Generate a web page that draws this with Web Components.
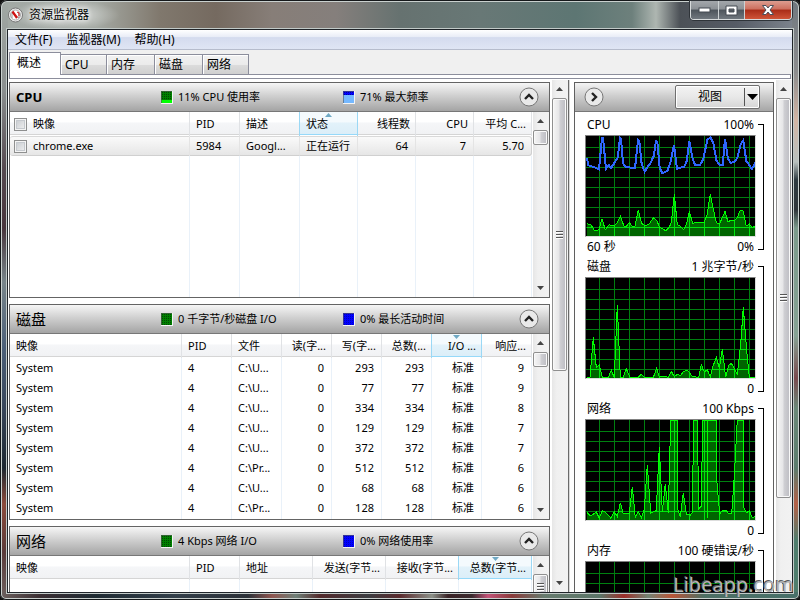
<!DOCTYPE html>
<html lang="zh-CN">
<head>
<meta charset="utf-8">
<title>资源监视器</title>
<style>
html, body { margin: 0; height: 100%; }
body { overflow: hidden; background: #111; color: #000; font: 12px/20px "Noto Sans", "Noto Sans CJK SC", sans-serif; }
</style>
</head>
<body>
<rm-window caption="资源监视器">
  <rm-menu slot="menu" items="文件(F)|监视器(M)|帮助(H)"></rm-menu>
  <rm-tabs slot="tabs" items="概述|CPU|内存|磁盘|网络"></rm-tabs>
  <rm-section slot="main" caption="CPU" bold meter1="11% CPU 使用率" meter2="71% 最大频率" kind1="low" kind2="high">
    <rm-table data="cpu"></rm-table>
    <rm-scrollbar slot="scroll" thumb="15"></rm-scrollbar>
  </rm-section>
  <rm-section slot="main" caption="磁盘" meter1="0 千字节/秒磁盘 I/O" meter2="0% 最长活动时间">
    <rm-table data="disk"></rm-table>
    <rm-scrollbar slot="scroll" thumb="15"></rm-scrollbar>
  </rm-section>
  <rm-section slot="main" caption="网络" meter1="4 Kbps 网络 I/O" meter2="0% 网络使用率">
    <rm-table data="net"></rm-table>
    <rm-scrollbar slot="scroll" thumb="26" grip></rm-scrollbar>
  </rm-section>
  <rm-scrollbar slot="mainscroll" thumb="273" grip></rm-scrollbar>
  <rm-graph slot="side" data="cpu" caption="CPU" max="100%" min="0%" span="60 秒"></rm-graph>
  <rm-graph slot="side" data="disk" caption="磁盘" max="1 兆字节/秒" min="0"></rm-graph>
  <rm-graph slot="side" data="net" caption="网络" max="100 Kbps" min="0"></rm-graph>
  <rm-graph slot="side" data="mem" caption="内存" max="100 硬错误/秒"></rm-graph>
  <rm-scrollbar slot="sidescroll" thumb="400" grip></rm-scrollbar>
</rm-window>

<script>
const BUTTON = `button { font: inherit; color: inherit; margin: 0; padding: 0; border: 0; background: none; }`;

function define(name, render) {
  customElements.define(name, class extends HTMLElement {
    connectedCallback() {
      if (this.shadowRoot) return;
      this.attachShadow({ mode: 'open' }).innerHTML = render(this);
    }
  });
}

/* ---------- window frame ---------- */
define('rm-window', el => `
<style>
${BUTTON}
:host { display: flex; flex-direction: column; box-sizing: border-box; height: 100vh; position: relative; padding: 0 8px 8px; border-radius: 7px 7px 6px 6px;
  box-shadow: inset 0 0 0 1px #15181a, inset 0 0 0 2px #c9d0ce;
  background:
    linear-gradient(90deg, #6d6260, #3b2f33 5%, #1f2b33 12%, #333f4a 22%, #2c3138 31%, #8f5650 34%, #6f8078 37%, #532a2c 40%, #3c3d41 46%, #5b2b2e 50%, #8b9088 54%, #3a2427 56%, #3b2a2e 59%, #c25378 61%, #8a3b3a 64%, #667b6e 68%, #5b7568 75%, #9c2e29 78%, #728373 81%, #b95538 84%, #4d6f64 88%, #48706a) left bottom / 100% 8px no-repeat,
    linear-gradient(180deg, #a2a9a5, #8a8f8f 15%, #554a50 28%, #47353c 38%, #78858a 47%, #4b5f78 58%, #38465a 68%, #1d2730 78%, #8c4b3b 84%, #5a3b3a 92%, #6d6260) left top / 8px 100% no-repeat,
    linear-gradient(180deg, #70787f, #8c8d8e 12%, #d3b5a4 20%, #b8c0be 27%, #2e3a40 30%, #30363a 35%, #7b9a8b 38%, #86a294 56%, #7a4a4e 63%, #6b8878 68%, #5b7c6d 78%, #b36047 84%, #4f7d6d 90%) right top / 8px 100% no-repeat,
    radial-gradient(closest-side, rgba(255,255,255,.6), rgba(255,255,255,0)) 10px 0 / 110px 30px no-repeat,
    linear-gradient(90deg, #a2a9a5 0, #a5aaa4 12%, #80786d 20%, #756a60 27%, #877e78 34%, #857f7c 42%, #667270 50%, #687876 60%, #5d7673 72%, #6d807c 79%, #aeb6b1 82%, #4c5157 85%, #565c66 92%, #818891) left top / 100% 30px no-repeat; }
header { flex: none; display: flex; align-items: flex-start; height: 30px; }
.cap { display: flex; align-items: center; gap: 6px; height: 30px; flex: 1; text-shadow: 0 0 5px #fff, 0 0 9px #fff; }
.ctl { display: flex; margin: 1px 0 0; border: 1px solid #d7dbdc; border-top: 0; border-radius: 0 0 4px 4px; box-shadow: 0 0 0 1px #2f3439; overflow: hidden; height: 18px; }
.ctl button { display: flex; align-items: center; justify-content: center; width: 28px; height: 18px; border-right: 1px solid #cdd2d4; background: linear-gradient(#a3a7ab, #8c9196 45%, #4d545b 50%, #70777e); }
.ctl button:nth-child(2) { width: 26px; }
.ctl button:last-child { width: 46px; border: 0; background: linear-gradient(#dd9d90, #cc6f5e 45%, #a92c18 50%, #cf5538); }
.frame { flex: 1; min-height: 0; display: flex; flex-direction: column; background: #fff; box-shadow: 0 0 0 1px #20252a, 0 0 0 2px #c2cac8; }
.body { flex: 1; min-height: 0; display: flex; padding-top: 1px; overflow: hidden; }
.main { flex: 1; min-width: 0; display: flex; flex-direction: column; gap: 6px; padding: 2px 2px 0 1px; overflow: hidden; }
.side { flex: none; display: flex; flex-direction: column; width: 198px; margin: 2px 2px 0 4px; border: 1px solid #5f5f5f; border-width: 1px 1px 0; overflow: hidden; }
.rule { flex: none; width: 2px; background: linear-gradient(90deg, #6a6a6a 1px, #d8d8d8 1px); }
.bar { flex: none; display: flex; align-items: center; justify-content: space-between; box-sizing: border-box; height: 29px; margin-bottom: 3px; padding: 0 13px 0 9px; border-bottom: 1px solid #777; background: linear-gradient(#f4f4f4, #cfcfcf 45%, #a6a6a6); }
.round { width: 20px; height: 20px; }
.split { display: flex; height: 22px; border: 1px solid #6f6f6f; border-radius: 2px; box-shadow: inset 0 0 0 1px #fff; background: linear-gradient(#f3f3f3, #e8e8e8 50%, #d6d6d6); }
.split .v { width: 68px; }
.split .d { display: flex; align-items: center; justify-content: center; width: 15px; margin: 2px 0; border-left: 1px solid #555; }
.mark { position: absolute; right: 6px; bottom: 1px; font-size: 20px; line-height: 28px; color: #b4b4b4; text-shadow: -1px -1px 0 #55585a; pointer-events: none; }
svg { display: block; }
</style>
<header>
  <div class="cap">
    <svg width="15" height="16" viewBox="0 0 15 16"><circle cx="7.500" cy="8" r="7" fill="#eee" stroke="#777"/><circle cx="7.500" cy="8" r="5" fill="#fff" stroke="#aaa"/><path d="M4 11V6l7 5V5" fill="none" stroke="#999"/><path d="M4.500 4.500 9 11" stroke="#d01010" stroke-width="2.200"/><path d="M9 5l2 1v3" fill="none" stroke="#d01010"/></svg>
    <span>${el.getAttribute('caption')}</span>
  </div>
  <div class="ctl">
    <button aria-label="最小化"><svg width="13" height="6"><rect x="1" y="1" width="11" height="4" fill="#fff" stroke="#454b52"/></svg></button>
    <button aria-label="最大化"><svg width="13" height="11"><path fill-rule="evenodd" d="M1 1h11v9H1zM4 4v3h5V4z" fill="#fff" stroke="#454b52"/></svg></button>
    <button aria-label="关闭"><svg width="14" height="12" viewBox="0 0 14 12"><path d="M1.500 1.500h3.500l2 2.500 2-2.500h3.500L9 6l3.500 4.500H9L7 8l-2 2.500H1.500L5 6z" fill="#fff" stroke="#4b4f5a"/></svg></button>
  </div>
</header>
<div class="frame">
  <slot name="menu"></slot>
  <slot name="tabs"></slot>
  <div class="body">
    <div class="main"><slot name="main"></slot></div>
    <slot name="mainscroll"></slot>
    <div class="rule"></div>
    <div class="side">
      <div class="bar">
        <button class="round" aria-label="隐藏图表"><svg width="20" height="20"><circle cx="10" cy="10" r="9" fill="#e9e9e9" stroke="#777"/><path d="M8 6l4 4-4 4" fill="none" stroke="#222" stroke-width="2.400"/></svg></button>
        <div class="split"><button class="v">视图</button><button class="d" aria-label="视图选项"><svg width="11" height="6"><path d="M0 0h11L5.500 6z"/></svg></button></div>
      </div>
      <slot name="side"></slot>
    </div>
    <slot name="sidescroll"></slot>
  </div>
</div>
<div class="mark">Libeapp.com</div>`);

/* ---------- menu bar ---------- */
define('rm-menu', el => `
<style>
${BUTTON}
:host { display: flex; flex: none; height: 19px; border-bottom: 1px solid #b6bccc; background: linear-gradient(#fff, #e9edf7 35%, #d4dbee 40%, #dfe5f4); }
button { padding: 0 7px; line-height: 19px; }
</style>
${el.getAttribute('items').split('|').map(t => `<button>${t}</button>`).join('')}`);

/* ---------- tab strip ---------- */
define('rm-tabs', el => `
<style>
${BUTTON}
:host { display: block; flex: none; background: #f0f0f0; padding: 2px 1px 0; }
div { display: flex; align-items: flex-end; }
button { box-sizing: border-box; width: 48px; height: 20px; padding: 0 0 0 4px; text-align: left; border: 1px solid #8c8e9c; border-bottom: 0; border-left: 0; box-shadow: inset 1px 1px 0 #fff; background: linear-gradient(#f2f2f2, #ebebeb 50%, #dcdcdc 52%, #cfcfcf); }
button:nth-child(2), button:last-child { width: 46px; }
button[aria-selected=true] { width: 52px; height: 23px; padding: 0 0 3px 7px; margin-bottom: -1px; border-left: 1px solid #8c8e9c; background: #fff; position: relative; }
.page { height: 3px; border: 1px solid #8c8e9c; background: #fff; }
</style>
<div role="tablist">${el.getAttribute('items').split('|').map((t, i) => `<button role="tab" aria-selected="${i === 0}">${t}</button>`).join('')}</div>
<div class="page"></div>`);

/* ---------- scroll bar ---------- */
define('rm-scrollbar', el => `
<style>
:host { display: flex; flex-direction: column; flex: none; align-items: flex-start; width: 16px; background: linear-gradient(90deg, #e6e6e6, #f0f0f0 30%, #f2f2f2); overflow: hidden; }
.a { flex: none; display: flex; align-items: center; justify-content: center; width: 15px; height: 18px; }
.t { flex: none; display: flex; align-items: center; justify-content: center; box-sizing: border-box; width: 15px; height: ${el.getAttribute('thumb')}px; border: 1px solid #8f8f8f; border-radius: 2px; box-shadow: inset 0 0 0 1px #f9f9f9; background: linear-gradient(90deg, #f5f5f5, #e6e6e8 45%, #cfcfd3 55%, #bcbcc2); }
.s { flex: 1; }
svg { display: block; }
</style>
<div class="a"><svg width="7" height="4"><path d="M0 4l3.500-4L7 4z" fill="#444"/></svg></div>
<div class="t">${el.hasAttribute('grip') ? '<svg width="7" height="8"><path d="M0 .5h7M0 3.500h7M0 6.500h7" stroke="#555"/><path d="M0 1.500h7M0 4.500h7M0 7.500h7" stroke="#fff"/></svg>' : ''}</div>
<div class="s"></div>
<div class="a"><svg width="7" height="4"><path d="M0 0h7L3.500 4z" fill="#444"/></svg></div>`);

/* ---------- collapsible section ---------- */
const METERS = {
  low: '<rect width="11" height="12" fill="#008000"/><rect y="9" width="11" height="3" fill="#00ff00"/><path d="M1.500 1v8M3.500 1v8M5.500 1v8M7.500 1v8M9.500 1v8" stroke="#004a00" stroke-dasharray="1 1"/>',
  high: '<rect width="11" height="12" fill="#74b8ff"/><rect width="11" height="4" fill="#0000ff"/><path d="M1.500 1v3M3.500 1v3M5.500 1v3M7.500 1v3M9.500 1v3" stroke="#0000a0" stroke-dasharray="1 1"/>',
  green: '<rect width="11" height="12" fill="#008000"/><path d="M1.500 1v11M3.500 1v11M5.500 1v11M7.500 1v11M9.500 1v11" stroke="#004a00" stroke-dasharray="1 1"/>',
  blue: '<rect width="11" height="12" fill="#0000ff"/><path d="M1.500 1v11M3.500 1v11M5.500 1v11M7.500 1v11M9.500 1v11" stroke="#0000c0" stroke-dasharray="1 1"/>'
};
const meter = kind => `<svg width="12" height="13" shape-rendering="crispEdges"><rect width="12" height="13" fill="#f4f4f4"/>${METERS[kind]}<path d="M.5 12V.5H11" fill="none" stroke="#555" stroke-opacity=".6"/></svg>`;
define('rm-section', el => `
<style>
${BUTTON}
:host { display: flex; flex-direction: column; flex: none; box-sizing: border-box; height: 216px; border: 1px solid #646464; overflow: hidden; }
header { flex: none; display: grid; grid-template-columns: 145px 182px 1fr 20px; align-items: center; box-sizing: border-box; height: 29px; padding: 0 10px 0 6px; border-bottom: 1px solid #777; background: linear-gradient(#f6f6f6, #d0d0d0 45%, #a4a4a4); }
h2 { margin: 0; font-size: ${el.hasAttribute('bold') ? '13px' : '15px'}; font-weight: ${el.hasAttribute('bold') ? 700 : 400}; }
.m { display: flex; align-items: center; gap: 5px; font-size: 11px; white-space: nowrap; }
button { width: 20px; height: 20px; }
.b { flex: 1; min-height: 0; display: flex; }
svg { display: block; flex: none; }
</style>
<header>
  <h2>${el.getAttribute('caption')}</h2>
  <div class="m">${meter(el.getAttribute('kind1') || 'green')}<span>${el.getAttribute('meter1')}</span></div>
  <div class="m">${meter(el.getAttribute('kind2') || 'blue')}<span>${el.getAttribute('meter2')}</span></div>
  <button aria-label="折叠"><svg width="20" height="20"><circle cx="10" cy="10" r="9" fill="#e9e9e9" stroke="#777"/><path d="M6 12l4-4 4 4" fill="none" stroke="#222" stroke-width="2.400"/></svg></button>
</header>
<div class="b"><slot></slot><slot name="scroll"></slot></div>`);

/* ---------- process tables ---------- */
const file = ['C:\\U...', 'C:\\U...', 'C:\\U...', 'C:\\U...', 'C:\\U...', 'C:\\Pr...', 'C:\\U...', 'C:\\Pr...'];
const bytes = [293, 77, 334, 129, 372, 512, 68, 128];
const reply = [9, 9, 8, 7, 7, 6, 6, 6];
const TABLES = {
  cpu: { cols: [['映像'], ['PID', 50], ['描述', 60], ['状态', 58, 'up'], ['线程数', 58], ['CPU', 58], ['平均 C...', 58]], num: 4, check: true,
    rows: [['chrome.exe', '5984', 'Googl...', '正在运行', '64', '7', '5.70']] },
  disk: { cols: [['映像'], ['PID', 50], ['文件', 50], ['读(字...', 50], ['写(字...', 50], ['总数(...', 50], ['I/O ...', 50, 'down'], ['响应...', 50]], num: 3,
    rows: bytes.map((b, i) => ['System', '4', file[i], '0', b, b, '标准', reply[i]]) },
  net: { cols: [['映像'], ['PID', 50], ['地址', 73], ['发送(字节...', 73], ['接收(字节...', 73], ['总数(字节...', 73, 'down']], num: 3, rows: [] }
};
define('rm-table', el => {
  const t = TABLES[el.getAttribute('data')];
  const cls = i => i >= t.num ? ' class="n"' : '';
  const box = (i, label) => t.check && i === 0 ? `<label><input type="checkbox">${label}</label>` : label;
  return `
<style>
:host { display: block; flex: 1; min-width: 0; font-size: 11px; }
table { width: 100%; height: 100%; table-layout: fixed; border-collapse: separate; border-spacing: 0; }
th, td { box-sizing: border-box; padding: 0 6px; height: 20px; line-height: 18px; font-weight: 400; text-align: left; white-space: nowrap; overflow: hidden; border-right: 1px solid #e9f1f9; }
tr { height: 20px; }
thead tr, th { height: 24px; }
th { position: relative; border-right-color: #e0e2e5; background: linear-gradient(#fff 45%, #f5f6f8 50%, #f1f2f4) 0 0 / 100% 22px no-repeat, linear-gradient(#d5d5d5, #d5d5d5) 0 22px / 100% 1px no-repeat; }
th.sort { box-shadow: -1px 0 0 #9bd8f5; border-right-color: #9bd8f5; background: linear-gradient(#f4fafd 45%, #e2f2fa 50%, #dceef8) 0 0 / 100% 22px no-repeat, linear-gradient(#96d9f9, #96d9f9) 0 22px / 100% 1px no-repeat; }
th svg { position: absolute; top: 1px; left: 0; right: 0; margin: auto; }
td.n { text-align: right; padding-right: 7px; }
th.n { text-align: right; padding-right: 5px; }
.fill, .fill td { height: auto; }
.sel td { border-top: 1px solid #d9d9d9; border-bottom: 1px solid #d0d0d0; border-right-color: #e4e4e4; background: linear-gradient(#fafafa, #e6e6e6); }
.sel td:first-child { border-radius: 3px 0 0 3px; }
.sel td:last-child { border-radius: 0 3px 3px 0; border-right-color: #d0d0d0; }
label { display: flex; align-items: center; gap: 6px; margin-left: -2px; }
input { appearance: none; box-sizing: border-box; width: 13px; height: 13px; margin: 0; border: 1px solid #8e8f8f; background: linear-gradient(135deg, #c3c7cc, #f4f4f4); box-shadow: inset 0 0 0 1px #f4f4f4, inset 0 0 0 2px #c5c9ce; }
</style>
<table>
<colgroup>${t.cols.map(c => c[1] ? `<col style="width:${c[1]}px">` : '<col>').join('')}<col style="width:1px"></colgroup>
<thead><tr>${t.cols.map((c, i) => `<th scope="col" class="${i >= t.num ? 'n' : ''}${c[2] ? ' sort' : ''}">${c[2] ? `<svg width="7" height="4"><path d="${c[2] === 'up' ? 'M0 4l3.500-4L7 4z' : 'M0 0h7L3.500 4z'}" fill="#6fa9c4"/></svg>` : ''}${box(i, c[0])}</th>`).join('')}</tr></thead>
<tbody>${t.rows.map(r => `<tr${t.check ? ' class="sel"' : ''}>${r.map((v, i) => `<td${cls(i)}>${box(i, v)}</td>`).join('')}</tr>`).join('')}
<tr class="fill">${t.cols.map(() => '<td></td>').join('')}</tr></tbody>
</table>`;
});

/* ---------- history graphs: samples are stored at three units per plot unit ---------- */
const GRAPHS = {
  cpu: { green: '0,263 12,266 21,282 29,284 36,280 45,248 55,281 66,266 82,270 92,258 100,241 111,270 119,270 127,260 135,271 144,270 154,222 164,262 174,269 187,264 199,245 209,254 218,274 236,284 247,273 253,260 262,174 271,266 280,270 290,281 299,263 307,226 317,263 325,258 352,258 360,237 370,174 379,219 388,260 397,265 406,245 414,226 423,258 433,252 442,255 451,245 460,222 469,226 478,270 487,264 496,274 505,269',
    blue: '0,65 4,88 18,92 36,100 45,6 48,6 57,98 66,88 72,96 84,78 92,65 99,6 102,8 108,82 116,92 144,97 153,12 157,15 164,85 173,107 182,92 189,85 200,60 207,15 211,17 218,95 226,112 241,105 250,80 261,26 270,98 292,92 299,75 307,15 317,70 325,88 338,88 349,70 361,12 370,4 379,20 388,72 398,88 407,87 414,8 423,70 432,80 442,78 451,65 461,25 469,13 478,75 487,88 495,100 505,80' },
  disk: { green: '0,299 9,298 19,178 28,268 37,260 46,298 64,298 73,277 82,299 91,80 100,298 109,298 118,272 128,297 154,298 163,289 172,298 199,298 209,271 217,298 226,294 244,298 253,280 262,296 271,289 280,293 289,281 299,277 307,282 316,296 335,298 343,260 352,281 361,276 370,296 379,262 388,238 397,271 406,212 416,298 425,262 433,256 451,288 461,198 469,88 479,218 487,298 505,299' },
  net: { green: '0,278 11,288 28,276 37,295 46,271 56,278 72,295 82,275 91,290 100,248 109,281 127,281 136,200 145,293 154,275 163,293 172,268 181,136 191,279 208,271 217,80 226,275 235,191 244,278 251,0 271,0 271,263 280,292 289,218 298,283 310,285 316,278 320,0 331,0 335,268 343,258 347,0 360,0 361,293 363,0 388,0 389,178 398,283 406,271 416,270 424,280 434,281 442,168 451,0 468,0 470,263 478,278 487,273 496,293 505,290' },
  mem: {}
};
const plot = list => list.split(' ').map(p => {
  const [x, y] = p.split(',');
  return `${(x / 3 + 1).toFixed(1)},${Math.min(y / 3, 99.5).toFixed(1)}`;
}).join(' ');
define('rm-graph', el => {
  const g = GRAPHS[el.getAttribute('data')];
  const green = g.green && plot(g.green);
  let grid = '';
  for (let x = 13; x < 169; x += 15) grid += `<rect x="${x}" y="0" width="1" height="100"/>`;
  for (let y = 11; y < 100; y += 10) grid += `<rect x="0" y="${y}" width="169" height="1"/>`;
  return `
<style>
:host { display: grid; flex: none; grid-template: 20px 102px 20px / 1fr 6px; column-gap: 2px; padding: 0 9px 0 10px; }
.r { display: flex; justify-content: space-between; padding: 0 2px; }
svg { display: block; box-sizing: border-box; width: 100%; height: 102px; border: 1px solid #808080; border-right-color: #ddd; border-bottom-color: #ddd; background: #000; grid-column: 1; isolation: isolate; }
polyline { fill: none; }
.f { fill: #006400; mix-blend-mode: plus-lighter; }
.k { grid-column: 2; grid-row: 1 / 4; margin: 9px 0 7px; border: 1px solid #000; border-left: 0; }
</style>
<div class="r"><span>${el.getAttribute('caption')}</span><span>${el.getAttribute('max')}</span></div>
<svg viewBox="0 0 169 100" preserveAspectRatio="none" shape-rendering="crispEdges" role="img" aria-label="${el.getAttribute('caption')}">
  <g fill="#008010">${grid}</g>
  ${green ? `<polygon class="f" points="1,100 ${green} 169,100"/><polyline points="${green}" stroke="#00ff00"/>` : ''}
  ${g.blue ? `<polyline points="${plot(g.blue)}" stroke="#2f66ff" stroke-width="2"/>` : ''}
</svg>
<div class="r"><span>${el.getAttribute('span') || ''}</span><span>${el.getAttribute('min') || ''}</span></div>
<div class="k"></div>`;
});
</script>
</body>
</html>
